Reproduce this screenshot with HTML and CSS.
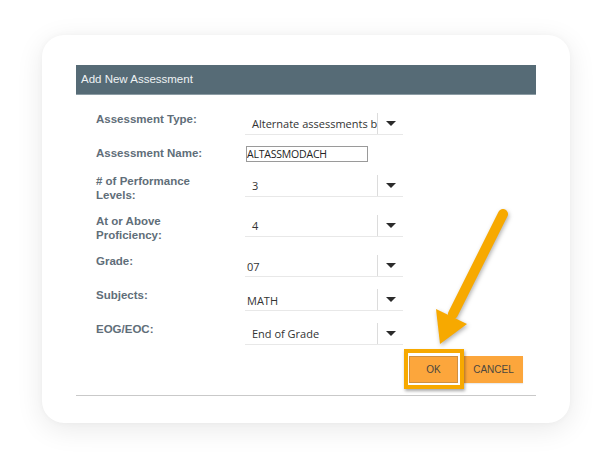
FILE: index.html
```html
<!DOCTYPE html>
<html>
<head>
<meta charset="utf-8">
<link rel="stylesheet" href="styles.css">
</head>
<body>
<div class="card">
  <div class="dialog">
    <div class="dlg-head">Add New Assessment</div>
    <div class="form">
      <div class="row r-sel">
        <div class="lbl">Assessment Type:</div>
        <div class="sel"><span class="val">Alternate assessments b</span><span class="dd"><i class="caret"></i></span></div>
      </div>
      <div class="row r-inp">
        <div class="lbl">Assessment Name:</div>
        <div class="inp">ALTASSMODACH</div>
      </div>
      <div class="row r-two">
        <div class="lbl">#&nbsp;of Performance<br>Levels:</div>
        <div class="sel"><span class="val">3</span><span class="dd"><i class="caret"></i></span></div>
      </div>
      <div class="row r-two">
        <div class="lbl">At or Above<br>Proficiency:</div>
        <div class="sel"><span class="val">4</span><span class="dd"><i class="caret"></i></span></div>
      </div>
      <div class="row r-sel">
        <div class="lbl">Grade:</div>
        <div class="sel"><span class="val v-tight">07</span><span class="dd"><i class="caret"></i></span></div>
      </div>
      <div class="row r-sel">
        <div class="lbl">Subjects:</div>
        <div class="sel"><span class="val v-tight">MATH</span><span class="dd"><i class="caret"></i></span></div>
      </div>
      <div class="row r-sel">
        <div class="lbl">EOG/EOC:</div>
        <div class="sel"><span class="val">End of Grade</span><span class="dd"><i class="caret"></i></span></div>
      </div>
      <div class="actions">
        <div class="btn-wrap"><button class="btn btn-ok">OK</button><span class="hl"></span></div>
        <button class="btn btn-cancel">CANCEL</button>
      </div>
    </div>
  </div>
</div>
<svg class="arrow" width="612" height="472" viewBox="0 0 612 472">
  <line x1="503" y1="214" x2="453" y2="314" stroke="#f7a900" stroke-width="10" stroke-linecap="round"/>
  <polygon points="436,309 467,324 440,344" fill="#f7a900"/>
</svg>
</body>
</html>
```
FILE: styles.css
```css
html, body {
  margin: 0;
  padding: 0;
  background: #ffffff;
}
body {
  width: 612px;
  height: 472px;
  overflow: hidden;
  position: relative;
  font-family: "Liberation Sans", Arial, sans-serif;
}
.card {
  position: relative;
  margin: 35px 0 0 42px;
  width: 528px;
  height: 388px;
  background: #ffffff;
  border-radius: 22px;
  box-shadow: 0 6px 28px rgba(0, 0, 0, 0.09), 0 0 6px rgba(0, 0, 0, 0.03);
  padding: 30px 0 0 34px;
  box-sizing: border-box;
}
.dialog {
  width: 460px;
  border-bottom: 1px solid #c9c9c9;
}
.dlg-head {
  height: 29px;
  line-height: 29px;
  background: #566b76;
  border-bottom: 1px solid #8c9ca4;
  color: #eef2f4;
  font-size: 11.5px;
  padding-left: 5px;
}
.form {
  padding: 17px 13px 12px 20px;
  display: flex;
  flex-direction: column;
}
.row {
  display: flex;
  align-items: flex-start;
}
.r-sel { height: 23px; margin-bottom: 11px; }
.r-inp { height: 17px; margin-bottom: 11px; }
.r-two { height: 29px; margin-bottom: 11px; }
.lbl {
  width: 149px;
  font-weight: bold;
  font-size: 11.5px;
  line-height: 14px;
  color: #5f6e79;
}
.sel {
  width: 158px;
  height: 22px;
  display: flex;
  border-bottom: 1px solid #e8e8e8;
  font-family: "Open Sans", "Noto Sans", sans-serif;
  font-size: 11px;
  color: #333;
}
.val {
  width: 125px;
  padding-left: 7px;
  line-height: 24px;
  white-space: nowrap;
  overflow: hidden;
}
.v-tight { padding-left: 2px; width: 130px; line-height: 26px; }
.dd {
  flex: 1;
  border-left: 1px solid #dcdcdc;
  display: flex;
  align-items: center;
  justify-content: center;
  margin-top: 1px;
}
.caret {
  width: 0;
  height: 0;
  border-left: 5px solid transparent;
  border-right: 5px solid transparent;
  border-top: 5px solid #2b2b2b;
}
.inp {
  margin-left: 1px;
  width: 120px;
  height: 14px;
  border: 1px solid #9a9a9a;
  font-family: "Open Sans", "Noto Sans", sans-serif;
  font-size: 10.5px;
  line-height: 14px;
  color: #222;
  letter-spacing: -0.2px;
}
.actions {
  display: flex;
  justify-content: flex-end;
  gap: 6px;
}
.btn-wrap {
  position: relative;
  display: flex;
}
.btn {
  border: none;
  background: #fca63c;
  color: #4b463f;
  font-family: "Liberation Sans", Arial, sans-serif;
  font-size: 10px;
  height: 27px;
  padding: 0;
  margin: 0;
}
.btn-ok {
  width: 49px;
  box-shadow: inset 0 0 0 1px rgba(120, 100, 80, 0.35);
}
.btn-cancel {
  width: 59px;
  box-shadow: 0 1px 1px rgba(0, 0, 0, 0.08);
}
.hl {
  position: absolute;
  left: -5px;
  top: -7px;
  right: -6px;
  bottom: -6px;
  border: 4px solid #f7a900;
  box-shadow: 1px 2px 3px rgba(0, 0, 0, 0.35);
  pointer-events: none;
}
.arrow {
  position: absolute;
  left: 0;
  top: 0;
  pointer-events: none;
  filter: drop-shadow(1px 2px 2px rgba(0, 0, 0, 0.3));
}
```
